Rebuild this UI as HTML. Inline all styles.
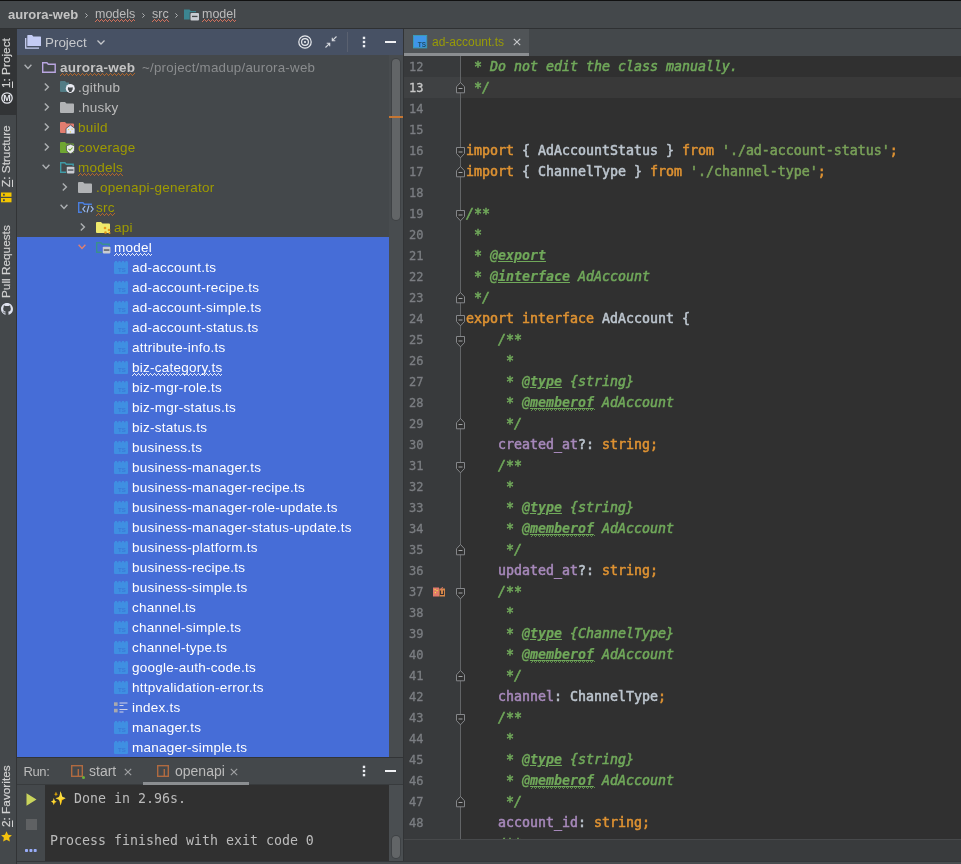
<!DOCTYPE html><html><head><meta charset="utf-8"><title>aurora-web</title><style>
*{box-sizing:border-box}
html,body{margin:0;padding:0}
body{width:961px;height:864px;overflow:hidden;background:#44484b;position:relative;font-family:"Liberation Sans",sans-serif;color:#bbbbbb;font-size:14px}
.abs{position:absolute}
#topline{left:0;top:0;width:961px;height:1px;background:#111}
#crumb{left:0;top:1px;width:961px;height:27px;background:#44484b}
#crumbline{left:0;top:28px;width:961px;height:1px;background:#2f3133}
.bc{position:absolute;top:0;height:27px;line-height:27px;font-size:12.5px;color:#bbbbbb;white-space:pre}
.bc.b{font-weight:bold;font-size:13px;color:#c4c4c4}
.wv{text-decoration:underline wavy #c86a55 1px;text-underline-offset:2px}
.wvo{text-decoration:underline wavy #a9642c 1px;text-underline-offset:2px}
.wvw{text-decoration:underline wavy #e6e9f7 1px;text-underline-offset:2px}
#strip{left:0;top:29px;width:17px;height:835px;background:#44484b;border-right:1px solid #323436}
#stripsel{left:0;top:29px;width:16px;height:86px;background:#323436}
.vt{position:absolute;left:-2px;width:16px;white-space:pre;font-size:11.8px;color:#d2d2d2;-webkit-text-stroke:0.2px;writing-mode:vertical-rl;transform:rotate(180deg);line-height:16px;text-align:left}
.vt u{text-decoration:underline;text-underline-offset:-0.3px}
#phead{left:17px;top:29px;width:386px;height:26px;background:#475164}
#tree{left:17px;top:55px;width:372px;height:702px;background:#44484b;overflow:hidden}
#tsb{left:389px;top:55px;width:14px;height:702px;background:#484c4f}
#tthumb{left:392px;top:59px;width:8px;height:161px;border-radius:4px;background:#626567;box-shadow:0 0 0 1px #3f4245}
#tmark{left:389px;top:116px;width:14px;height:2px;background:#c57633}
#sel{left:0;top:182px;width:372px;height:520px;background:#466dd7}
.row{position:absolute;left:0;height:20px;line-height:20px;width:372px;white-space:pre}
.row .t{position:absolute;top:1px;font-size:13.5px;letter-spacing:0.25px;line-height:20px}
.ol{color:#9f9b00}
.wh{color:#ffffff}
.dim{color:#8a8c8e}
svg{position:absolute;overflow:visible}
#root{position:absolute;left:0;top:0;width:961px;height:864px;will-change:transform}
#vdiv{left:403px;top:29px;width:1px;height:832px;background:#323436}
#tabbar{left:404px;top:29px;width:557px;height:27px;background:#44484b}
#tab{left:404px;top:29px;width:125px;height:27px;background:#505457}
#tabul{left:404px;top:53px;width:125px;height:3px;background:#8b8e91}
#tabt{left:432px;top:30px;height:25px;line-height:25px;font-size:12px;color:#989b08;white-space:pre}
#gutter{left:404px;top:56px;width:56px;height:783px;background:#383a3c}
#gline{left:460px;top:56px;width:1px;height:783px;background:#626466}
#code{left:461px;top:56px;width:500px;height:783px;background:#303030;overflow:hidden}
#cur{left:0;top:21px;width:500px;height:21px;background:#393939}
#gcur{left:404px;top:77px;width:56px;height:21px;background:#3f4143}
.ln{position:absolute;left:409px;-webkit-text-stroke:0.3px;width:40px;height:21px;line-height:21px;font-family:"DejaVu Sans Mono","Liberation Mono",monospace;font-size:12px;color:#7b7e82;white-space:pre}
.ln.c{color:#c8c8c8}
.cl{position:absolute;left:5px;-webkit-text-stroke:0.55px;height:21px;line-height:21px;font-family:"DejaVu Sans Mono","Liberation Mono",monospace;font-size:13.29px;color:#bcc5ce;white-space:pre}
.k{color:#de9232}
.s{color:#78a058}
.p{color:#a688ba}
.d{color:#70a85a;font-style:italic}
.dt{color:#70a85a;font-style:italic;font-weight:bold;text-decoration:underline;-webkit-text-stroke:0.2px}
.dtw{color:#70a85a;font-style:italic;font-weight:bold;text-decoration:underline}
#ebot{left:404px;top:839px;width:557px;height:22px;background:#393b3d;border-top:1px solid #47494b}
#bottom{left:17px;top:861px;width:944px;height:3px;background:#494d50;border-top:1px solid #34373a}
#rdiv{left:17px;top:757px;width:386px;height:1px;background:#323436}
#rhead{left:17px;top:758px;width:386px;height:27px;background:#44484b}
#rul{left:143px;top:782px;width:106px;height:3px;background:#8b8e91}
#rtool{left:17px;top:785px;width:28px;height:76px;background:#44484b}
#cons{left:45px;top:785px;width:344px;height:76px;background:#303030}
#csb{left:389px;top:785px;width:14px;height:76px;background:#4a4e51}
#cthumb{left:392px;top:836px;width:8px;height:22px;border-radius:4px;background:#626567;box-shadow:0 0 0 1px #3f4245}
.co{position:absolute;left:50px;height:21px;line-height:21px;font-family:"DejaVu Sans Mono","Liberation Mono",monospace;font-size:13.29px;color:#bbbbbb;white-space:pre}
.rt{position:absolute;top:758px;height:25px;line-height:26px;font-size:14px;color:#bbbbbb;white-space:pre}
</style></head><body><div id="root">
<svg width="0" height="0" style="left:0;top:0"><defs><pattern id="wv0" width="4" height="3" patternUnits="userSpaceOnUse"><rect x="0" y="2" width="1" height="1" fill="#d1705c"/><rect x="1" y="1" width="1" height="1" fill="#d1705c"/><rect x="2" y="0" width="1" height="1" fill="#d1705c"/><rect x="3" y="1" width="1" height="1" fill="#d1705c"/></pattern><pattern id="wv1" width="4" height="3" patternUnits="userSpaceOnUse"><rect x="0" y="2" width="1" height="1" fill="#b0652b"/><rect x="1" y="1" width="1" height="1" fill="#b0652b"/><rect x="2" y="0" width="1" height="1" fill="#b0652b"/><rect x="3" y="1" width="1" height="1" fill="#b0652b"/></pattern><pattern id="wv2" width="4" height="3" patternUnits="userSpaceOnUse"><rect x="0" y="2" width="1" height="1" fill="#e6e9f7"/><rect x="1" y="1" width="1" height="1" fill="#e6e9f7"/><rect x="2" y="0" width="1" height="1" fill="#e6e9f7"/><rect x="3" y="1" width="1" height="1" fill="#e6e9f7"/></pattern><pattern id="wv3" width="4" height="3" patternUnits="userSpaceOnUse"><rect x="0" y="2" width="1" height="1" fill="#5f8f4c"/><rect x="1" y="1" width="1" height="1" fill="#5f8f4c"/><rect x="2" y="0" width="1" height="1" fill="#5f8f4c"/><rect x="3" y="1" width="1" height="1" fill="#5f8f4c"/></pattern></defs></svg>
<div class="abs" id="crumb">
<span class="bc b" style="left:8px">aurora-web</span>
<svg style="left:84.5px;top:11.500px" width="3" height="5" viewBox="0 0 3 5"><path d="M0.400 0.400L2.500 2.500L0.400 4.600" fill="none" stroke="#b0b2b4" stroke-width="1"/></svg>
<span class="bc" style="left:95px">models</span><svg style="left:95px;top:18px" width="40" height="3" shape-rendering="crispEdges"><rect width="40" height="3" fill="url(#wv0)"/></svg>
<svg style="left:141.5px;top:11.500px" width="3" height="5" viewBox="0 0 3 5"><path d="M0.400 0.400L2.500 2.500L0.400 4.600" fill="none" stroke="#b0b2b4" stroke-width="1"/></svg>
<span class="bc" style="left:152px">src</span><svg style="left:152px;top:18px" width="17" height="3" shape-rendering="crispEdges"><rect width="17" height="3" fill="url(#wv0)"/></svg>
<svg style="left:175.0px;top:11.500px" width="3" height="5" viewBox="0 0 3 5"><path d="M0.400 0.400L2.500 2.500L0.400 4.600" fill="none" stroke="#b0b2b4" stroke-width="1"/></svg>
<svg style="left:184px;top:7px" width="16" height="13" viewBox="0 0 16 13"><path d="M0 1.500h5.500l1.300 1.600H12V11.500H0z" fill="#3b8591"/><rect x="5.700" y="4.200" width="10" height="9" fill="#44484b"/><rect x="6.5" y="5" width="8.5" height="7.5" rx="1" fill="#c9ccd2"/><rect x="8" y="7.8" width="5.5" height="1.3" fill="#44484b"/></svg>
<span class="bc" style="left:202px">model</span><svg style="left:202px;top:18px" width="34" height="3" shape-rendering="crispEdges"><rect width="34" height="3" fill="url(#wv0)"/></svg>
</div>
<div class="abs" id="topline"></div><div class="abs" id="crumbline"></div>
<div class="abs" id="strip"></div><div class="abs" id="stripsel"></div>
<div class="vt" style="top:38px;height:50px"><u>1</u>: Project</div>
<div class="vt" style="top:126px;height:61px"><u>Z</u>: Structure</div>
<div class="vt" style="top:227px;height:71px">Pull Requests</div>
<div class="vt" style="top:766px;height:61px"><u>2</u>: Favorites</div>
<svg style="left:1px;top:92px" width="12" height="12" viewBox="0 0 12 12"><circle cx="6" cy="6" r="5.2" fill="none" stroke="#e2e4ea" stroke-width="1.3"/><text x="6" y="9.200" text-anchor="middle" font-family="Liberation Sans,sans-serif" font-size="9" font-weight="bold" fill="#e2e4ea">M</text></svg>
<svg style="left:1px;top:192px" width="11" height="11" viewBox="0 0 11 11"><rect x="0" y="0.5" width="10.5" height="4.3" fill="#f2c500"/><rect x="0" y="6" width="10.5" height="4.3" fill="#f2c500"/><rect x="2" y="1.8" width="1.8" height="1.8" fill="#44484b"/><rect x="2" y="7.3" width="1.8" height="1.8" fill="#44484b"/></svg>
<svg style="left:1px;top:303px" width="12" height="12" viewBox="0 0 16 16"><path fill="#dfe2ee" d="M8 0C3.58 0 0 3.58 0 8c0 3.54 2.29 6.53 5.47 7.59.4.07.55-.17.55-.38 0-.19-.01-.82-.01-1.49-2.01.37-2.53-.49-2.69-.94-.09-.23-.48-.94-.82-1.13-.28-.15-.68-.52-.01-.53.63-.01 1.08.58 1.23.82.72 1.21 1.87.87 2.33.66.07-.52.28-.87.51-1.07-1.78-.2-3.64-.89-3.64-3.95 0-.87.31-1.59.82-2.15-.08-.2-.36-1.02.08-2.12 0 0 .67-.21 2.2.82.64-.18 1.32-.27 2-.27s1.36.09 2 .27c1.53-1.04 2.2-.82 2.2-.82.44 1.1.16 1.92.08 2.12.51.56.82 1.27.82 2.15 0 3.07-1.87 3.75-3.65 3.95.29.25.54.73.54 1.48 0 1.07-.01 1.93-.01 2.2 0 .21.15.46.55.38A8.01 8.01 0 0 0 16 8c0-4.42-3.58-8-8-8z"/></svg>
<svg style="left:1px;top:831px" width="11" height="11" viewBox="0 0 11 11"><path d="M5.5 0.2L7.1 3.8L10.9 4.2L8.1 6.8L8.9 10.6L5.5 8.7L2.1 10.6L2.9 6.8L0.1 4.2L3.9 3.8Z" fill="#f4c20d"/></svg>
<div class="abs" id="phead">
<svg style="left:8px;top:6px" width="16" height="14" viewBox="0 0 16 14"><path d="M0.700 3v10.100h13.300" fill="none" stroke="#c8cff2" stroke-width="1.300"/><path d="M2.300 0.600a0.600 0.600 0 0 1 0.600-0.600h4.100l1.300 1.500h7.100a0.600 0.600 0 0 1 0.600 0.600V10.400a0.600 0.600 0 0 1-0.600 0.600H2.300z" fill="#c3cbf4"/></svg>
<span class="abs" style="left:28px;top:0;height:26px;line-height:27px;font-size:13.4px;color:#c6c8cc">Project</span>
<svg style="left:80px;top:11px" width="8" height="5" viewBox="0 0 8 5"><path d="M0.5 0.5L4 4L7.5 0.5" fill="none" stroke="#c6c8cc" stroke-width="1.3"/></svg>
<svg style="left:281px;top:6px" width="14" height="14" viewBox="0 0 14 14"><circle cx="7" cy="7" r="6.2" fill="none" stroke="#e8eaee" stroke-width="1.2"/><circle cx="7" cy="7" r="3.4" fill="none" stroke="#e8eaee" stroke-width="1.2"/><circle cx="7" cy="7" r="1.1" fill="#e8eaee"/></svg>
<svg style="left:308px;top:7px" width="12" height="12" viewBox="0 0 12 12"><path d="M11.5 0.5L7.3 4.7M7.3 1.7v3h3M0.5 11.5L4.7 7.3M4.7 10.3v-3h-3" fill="none" stroke="#d5d8dd" stroke-width="1.1"/></svg>
<div class="abs" style="left:330px;top:3px;width:1px;height:20px;background:#5a6170"></div>
<svg style="left:345px;top:7px" width="4" height="12" viewBox="0 0 4 12"><rect x="0.8" y="0.7" width="2.4" height="2.4" fill="#eceef2"/><rect x="0.8" y="4.8" width="2.4" height="2.4" fill="#eceef2"/><rect x="0.8" y="8.9" width="2.4" height="2.4" fill="#eceef2"/></svg>
<div class="abs" style="left:367.5px;top:11.7px;width:11px;height:2.6px;background:#f0f1f4"></div>
</div>
<div class="abs" id="tree"><div class="abs" id="sel"></div>
<div class="row" style="top:2px"><svg style="left:7px;top:7px" width="8" height="6" viewBox="0 0 8 6"><path d="M0.6 0.8L4 4.4L7.4 0.8" fill="none" stroke="#adb0b3" stroke-width="1.4"/></svg><svg style="left:25px;top:5px" width="14" height="11" viewBox="0 0 14 11"><path d="M0.7 0.7h4.2l1.4 1.6h6.9v7.9H0.7z" fill="none" stroke="#b9a6e0" stroke-width="1.4"/></svg><span class="t " style="left:43px"><b style="color:#c4c4c4">aurora-web</b></span><span class="t dim" style="left:125px;font-size:13.3px">~/project/madup/aurora-web</span><svg style="left:43px;top:16px" width="75" height="3" shape-rendering="crispEdges"><rect width="75" height="3" fill="url(#wv1)"/></svg></div>
<div class="row" style="top:22px"><svg style="left:27px;top:6px" width="6" height="8" viewBox="0 0 6 8"><path d="M0.8 0.6L4.4 4L0.8 7.4" fill="none" stroke="#adb0b3" stroke-width="1.4"/></svg><svg style="left:43px;top:4px" width="15" height="12" viewBox="0 0 15 12"><path d="M0 1a1 1 0 0 1 1-1h4l1.5 1.6H9V11H1a1 1 0 0 1-1-1z" fill="#527c85"/><circle cx="10.3" cy="7.4" r="4.5" fill="#e9ebf2"/><path d="M8.6 9.6c-.6-.6-.9-1.4-.7-2.3.1-.5.0-1 .2-1.4l.9.5h2.6l.9-.5c.2.4.1.9.2 1.4.2.9-.1 1.7-.7 2.3-.3.3-.6.9-.6 1.5h-2.200c0-.6-.3-1.200-.6-1.500z" fill="#44484b"/></svg><span class="t " style="left:61px">.github</span></div>
<div class="row" style="top:42px"><svg style="left:27px;top:6px" width="6" height="8" viewBox="0 0 6 8"><path d="M0.8 0.6L4.4 4L0.8 7.4" fill="none" stroke="#adb0b3" stroke-width="1.4"/></svg><svg style="left:43px;top:5px" width="14" height="11" viewBox="0 0 14 11"><path d="M0 1a1 1 0 0 1 1-1h4l1.5 1.6H13a1 1 0 0 1 1 1V10a1 1 0 0 1-1 1H1a1 1 0 0 1-1-1z" fill="#b1b3b5"/></svg><span class="t " style="left:61px">.husky</span></div>
<div class="row" style="top:62px"><svg style="left:27px;top:6px" width="6" height="8" viewBox="0 0 6 8"><path d="M0.8 0.6L4.4 4L0.8 7.4" fill="none" stroke="#adb0b3" stroke-width="1.4"/></svg><svg style="left:43px;top:5px" width="14" height="11" viewBox="0 0 14 11"><path d="M0 1a1 1 0 0 1 1-1h4l1.5 1.6H13a1 1 0 0 1 1 1V10a1 1 0 0 1-1 1H1a1 1 0 0 1-1-1z" fill="#e27d6f"/></svg><svg style="left:49px;top:8px" width="9" height="9" viewBox="0 0 9 9"><path d="M4.500 0L9 3.500V9H0V3.500z" fill="#e0e4f4" stroke="#44484b" stroke-width="0.800"/><rect x="2" y="4" width="1.200" height="1.200" fill="#e8d84a"/><rect x="5.500" y="3.500" width="1.200" height="1.200" fill="#e8d84a"/><rect x="3.800" y="6.300" width="1.200" height="1.200" fill="#e8d84a"/></svg><span class="t ol" style="left:61px">build</span></div>
<div class="row" style="top:82px"><svg style="left:27px;top:6px" width="6" height="8" viewBox="0 0 6 8"><path d="M0.8 0.6L4.4 4L0.8 7.4" fill="none" stroke="#adb0b3" stroke-width="1.4"/></svg><svg style="left:43px;top:5px" width="14" height="11" viewBox="0 0 14 11"><path d="M0 1a1 1 0 0 1 1-1h4l1.5 1.6H13a1 1 0 0 1 1 1V10a1 1 0 0 1-1 1H1a1 1 0 0 1-1-1z" fill="#6fa632"/></svg><svg style="left:49px;top:7px" width="9" height="10" viewBox="0 0 9 10"><path d="M4.500 0.300L8.600 1.800V5c0 2.500-2 4-4.100 4.700C2.400 9 0.400 7.500 0.400 5V1.800z" fill="#e8ebe6" stroke="#44484b" stroke-width="0.800"/><path d="M2.500 4.800l1.500 1.500l2.600-2.800" fill="none" stroke="#6fa632" stroke-width="1.100"/></svg><span class="t ol" style="left:61px">coverage</span></div>
<div class="row" style="top:102px"><svg style="left:25px;top:7px" width="8" height="6" viewBox="0 0 8 6"><path d="M0.6 0.8L4 4.4L7.4 0.8" fill="none" stroke="#adb0b3" stroke-width="1.4"/></svg><svg style="left:43px;top:5px" width="14" height="11" viewBox="0 0 14 11"><path d="M0.7 0.7h4.2l1.4 1.6h6.9v7.9H0.7z" fill="none" stroke="#3f9aa6" stroke-width="1.4"/></svg><svg style="left:49px;top:9px" width="9" height="8" viewBox="0 0 9 8"><rect x="0" y="0" width="9" height="8" rx="1" fill="#44484b"/><rect x="0.8" y="0.8" width="7.6" height="6.6" rx="0.8" fill="#c9ccd2"/><rect x="1.8" y="3.4" width="5.6" height="1.3" fill="#4a4d55"/></svg><span class="t ol" style="left:61px">models</span><svg style="left:61px;top:16px" width="45" height="3" shape-rendering="crispEdges"><rect width="45" height="3" fill="url(#wv1)"/></svg></div>
<div class="row" style="top:122px"><svg style="left:45px;top:6px" width="6" height="8" viewBox="0 0 6 8"><path d="M0.8 0.6L4.4 4L0.8 7.4" fill="none" stroke="#adb0b3" stroke-width="1.4"/></svg><svg style="left:61px;top:5px" width="14" height="11" viewBox="0 0 14 11"><path d="M0 1a1 1 0 0 1 1-1h4l1.5 1.6H13a1 1 0 0 1 1 1V10a1 1 0 0 1-1 1H1a1 1 0 0 1-1-1z" fill="#b1b3b5"/></svg><span class="t ol" style="left:79px">.openapi-generator</span></div>
<div class="row" style="top:142px"><svg style="left:43px;top:7px" width="8" height="6" viewBox="0 0 8 6"><path d="M0.6 0.8L4 4.4L7.4 0.8" fill="none" stroke="#adb0b3" stroke-width="1.4"/></svg><svg style="left:61px;top:5px" width="14" height="11" viewBox="0 0 14 11"><path d="M0.7 0.7h4.2l1.4 1.6h6.9v7.9H0.7z" fill="none" stroke="#4a7fe0" stroke-width="1.4"/></svg><svg style="left:65px;top:8px" width="12" height="8" viewBox="0 0 12 8"><rect x="0" y="0" width="12" height="8" fill="#44484b"/><path d="M3.200 1.200L0.800 4L3.200 6.800M8.800 1.200L11.200 4L8.800 6.800M7 0.500L5 7.500" fill="none" stroke="#9fc0f5" stroke-width="1.100"/></svg><span class="t ol" style="left:79px">src</span><svg style="left:79px;top:16px" width="19" height="3" shape-rendering="crispEdges"><rect width="19" height="3" fill="url(#wv1)"/></svg></div>
<div class="row" style="top:162px"><svg style="left:63px;top:6px" width="6" height="8" viewBox="0 0 6 8"><path d="M0.8 0.6L4.4 4L0.8 7.4" fill="none" stroke="#adb0b3" stroke-width="1.4"/></svg><svg style="left:79px;top:5px" width="14" height="11" viewBox="0 0 14 11"><path d="M0 1a1 1 0 0 1 1-1h4l1.5 1.6H13a1 1 0 0 1 1 1V10a1 1 0 0 1-1 1H1a1 1 0 0 1-1-1z" fill="#efe96c"/></svg><svg style="left:86px;top:9px" width="8" height="8" viewBox="0 0 8 8"><circle cx="2" cy="2" r="1.300" fill="#e89a1c"/><circle cx="6" cy="4" r="1.300" fill="#e89a1c"/><circle cx="2.500" cy="6.500" r="1.300" fill="#e89a1c"/><circle cx="6.500" cy="7" r="1" fill="#e89a1c"/></svg><span class="t ol" style="left:97px">api</span></div>
<div class="row" style="top:182px"><svg style="left:61px;top:7px" width="8" height="6" viewBox="0 0 8 6"><path d="M0.6 0.8L4 4.4L7.4 0.8" fill="none" stroke="#e08070" stroke-width="1.4"/></svg><svg style="left:79px;top:5px" width="14" height="11" viewBox="0 0 14 11"><path d="M0.7 0.7h4.2l1.4 1.6h6.9v7.9H0.7z" fill="none" stroke="#3a8f8f" stroke-width="1.4"/></svg><svg style="left:85px;top:9px" width="9" height="8" viewBox="0 0 9 8"><rect x="0" y="0" width="9" height="8" rx="1" fill="#466dd7"/><rect x="0.8" y="0.8" width="7.6" height="6.6" rx="0.8" fill="#c9ccd2"/><rect x="1.8" y="3.4" width="5.6" height="1.3" fill="#4a4d55"/></svg><span class="t wh" style="left:97px">model</span><svg style="left:97px;top:16px" width="38" height="3" shape-rendering="crispEdges"><rect width="38" height="3" fill="url(#wv2)"/></svg></div>
<div class="row" style="top:202px"><svg style="left:97px;top:4px" width="14" height="13" viewBox="0 0 14 13"><path d="M0 1.200h14V12a1 1 0 0 1-1 1H1a1 1 0 0 1-1-1z" fill="#3f8fe2"/><path d="M1 0h2v2H1zM4.500 0h2v2h-2zM8 0h2v2H8zM11.500 0h2v2h-2z" fill="#3f8fe2"/><text x="4" y="11" font-family="Liberation Sans,sans-serif" font-size="6" font-weight="bold" fill="#3a78d6">TS</text></svg><span class="t wh" style="left:115px">ad-account.ts</span></div>
<div class="row" style="top:222px"><svg style="left:97px;top:4px" width="14" height="13" viewBox="0 0 14 13"><path d="M0 1.200h14V12a1 1 0 0 1-1 1H1a1 1 0 0 1-1-1z" fill="#3f8fe2"/><path d="M1 0h2v2H1zM4.500 0h2v2h-2zM8 0h2v2H8zM11.500 0h2v2h-2z" fill="#3f8fe2"/><text x="4" y="11" font-family="Liberation Sans,sans-serif" font-size="6" font-weight="bold" fill="#3a78d6">TS</text></svg><span class="t wh" style="left:115px">ad-account-recipe.ts</span></div>
<div class="row" style="top:242px"><svg style="left:97px;top:4px" width="14" height="13" viewBox="0 0 14 13"><path d="M0 1.200h14V12a1 1 0 0 1-1 1H1a1 1 0 0 1-1-1z" fill="#3f8fe2"/><path d="M1 0h2v2H1zM4.500 0h2v2h-2zM8 0h2v2H8zM11.500 0h2v2h-2z" fill="#3f8fe2"/><text x="4" y="11" font-family="Liberation Sans,sans-serif" font-size="6" font-weight="bold" fill="#3a78d6">TS</text></svg><span class="t wh" style="left:115px">ad-account-simple.ts</span></div>
<div class="row" style="top:262px"><svg style="left:97px;top:4px" width="14" height="13" viewBox="0 0 14 13"><path d="M0 1.200h14V12a1 1 0 0 1-1 1H1a1 1 0 0 1-1-1z" fill="#3f8fe2"/><path d="M1 0h2v2H1zM4.500 0h2v2h-2zM8 0h2v2H8zM11.500 0h2v2h-2z" fill="#3f8fe2"/><text x="4" y="11" font-family="Liberation Sans,sans-serif" font-size="6" font-weight="bold" fill="#3a78d6">TS</text></svg><span class="t wh" style="left:115px">ad-account-status.ts</span></div>
<div class="row" style="top:282px"><svg style="left:97px;top:4px" width="14" height="13" viewBox="0 0 14 13"><path d="M0 1.200h14V12a1 1 0 0 1-1 1H1a1 1 0 0 1-1-1z" fill="#3f8fe2"/><path d="M1 0h2v2H1zM4.500 0h2v2h-2zM8 0h2v2H8zM11.500 0h2v2h-2z" fill="#3f8fe2"/><text x="4" y="11" font-family="Liberation Sans,sans-serif" font-size="6" font-weight="bold" fill="#3a78d6">TS</text></svg><span class="t wh" style="left:115px">attribute-info.ts</span></div>
<div class="row" style="top:302px"><svg style="left:97px;top:4px" width="14" height="13" viewBox="0 0 14 13"><path d="M0 1.200h14V12a1 1 0 0 1-1 1H1a1 1 0 0 1-1-1z" fill="#3f8fe2"/><path d="M1 0h2v2H1zM4.500 0h2v2h-2zM8 0h2v2H8zM11.500 0h2v2h-2z" fill="#3f8fe2"/><text x="4" y="11" font-family="Liberation Sans,sans-serif" font-size="6" font-weight="bold" fill="#3a78d6">TS</text></svg><span class="t wh" style="left:115px">biz-category.ts</span><svg style="left:115px;top:16px" width="90" height="3" shape-rendering="crispEdges"><rect width="90" height="3" fill="url(#wv2)"/></svg></div>
<div class="row" style="top:322px"><svg style="left:97px;top:4px" width="14" height="13" viewBox="0 0 14 13"><path d="M0 1.200h14V12a1 1 0 0 1-1 1H1a1 1 0 0 1-1-1z" fill="#3f8fe2"/><path d="M1 0h2v2H1zM4.500 0h2v2h-2zM8 0h2v2H8zM11.500 0h2v2h-2z" fill="#3f8fe2"/><text x="4" y="11" font-family="Liberation Sans,sans-serif" font-size="6" font-weight="bold" fill="#3a78d6">TS</text></svg><span class="t wh" style="left:115px">biz-mgr-role.ts</span></div>
<div class="row" style="top:342px"><svg style="left:97px;top:4px" width="14" height="13" viewBox="0 0 14 13"><path d="M0 1.200h14V12a1 1 0 0 1-1 1H1a1 1 0 0 1-1-1z" fill="#3f8fe2"/><path d="M1 0h2v2H1zM4.500 0h2v2h-2zM8 0h2v2H8zM11.500 0h2v2h-2z" fill="#3f8fe2"/><text x="4" y="11" font-family="Liberation Sans,sans-serif" font-size="6" font-weight="bold" fill="#3a78d6">TS</text></svg><span class="t wh" style="left:115px">biz-mgr-status.ts</span></div>
<div class="row" style="top:362px"><svg style="left:97px;top:4px" width="14" height="13" viewBox="0 0 14 13"><path d="M0 1.200h14V12a1 1 0 0 1-1 1H1a1 1 0 0 1-1-1z" fill="#3f8fe2"/><path d="M1 0h2v2H1zM4.500 0h2v2h-2zM8 0h2v2H8zM11.500 0h2v2h-2z" fill="#3f8fe2"/><text x="4" y="11" font-family="Liberation Sans,sans-serif" font-size="6" font-weight="bold" fill="#3a78d6">TS</text></svg><span class="t wh" style="left:115px">biz-status.ts</span></div>
<div class="row" style="top:382px"><svg style="left:97px;top:4px" width="14" height="13" viewBox="0 0 14 13"><path d="M0 1.200h14V12a1 1 0 0 1-1 1H1a1 1 0 0 1-1-1z" fill="#3f8fe2"/><path d="M1 0h2v2H1zM4.500 0h2v2h-2zM8 0h2v2H8zM11.500 0h2v2h-2z" fill="#3f8fe2"/><text x="4" y="11" font-family="Liberation Sans,sans-serif" font-size="6" font-weight="bold" fill="#3a78d6">TS</text></svg><span class="t wh" style="left:115px">business.ts</span></div>
<div class="row" style="top:402px"><svg style="left:97px;top:4px" width="14" height="13" viewBox="0 0 14 13"><path d="M0 1.200h14V12a1 1 0 0 1-1 1H1a1 1 0 0 1-1-1z" fill="#3f8fe2"/><path d="M1 0h2v2H1zM4.500 0h2v2h-2zM8 0h2v2H8zM11.500 0h2v2h-2z" fill="#3f8fe2"/><text x="4" y="11" font-family="Liberation Sans,sans-serif" font-size="6" font-weight="bold" fill="#3a78d6">TS</text></svg><span class="t wh" style="left:115px">business-manager.ts</span></div>
<div class="row" style="top:422px"><svg style="left:97px;top:4px" width="14" height="13" viewBox="0 0 14 13"><path d="M0 1.200h14V12a1 1 0 0 1-1 1H1a1 1 0 0 1-1-1z" fill="#3f8fe2"/><path d="M1 0h2v2H1zM4.500 0h2v2h-2zM8 0h2v2H8zM11.500 0h2v2h-2z" fill="#3f8fe2"/><text x="4" y="11" font-family="Liberation Sans,sans-serif" font-size="6" font-weight="bold" fill="#3a78d6">TS</text></svg><span class="t wh" style="left:115px">business-manager-recipe.ts</span></div>
<div class="row" style="top:442px"><svg style="left:97px;top:4px" width="14" height="13" viewBox="0 0 14 13"><path d="M0 1.200h14V12a1 1 0 0 1-1 1H1a1 1 0 0 1-1-1z" fill="#3f8fe2"/><path d="M1 0h2v2H1zM4.500 0h2v2h-2zM8 0h2v2H8zM11.500 0h2v2h-2z" fill="#3f8fe2"/><text x="4" y="11" font-family="Liberation Sans,sans-serif" font-size="6" font-weight="bold" fill="#3a78d6">TS</text></svg><span class="t wh" style="left:115px">business-manager-role-update.ts</span></div>
<div class="row" style="top:462px"><svg style="left:97px;top:4px" width="14" height="13" viewBox="0 0 14 13"><path d="M0 1.200h14V12a1 1 0 0 1-1 1H1a1 1 0 0 1-1-1z" fill="#3f8fe2"/><path d="M1 0h2v2H1zM4.500 0h2v2h-2zM8 0h2v2H8zM11.500 0h2v2h-2z" fill="#3f8fe2"/><text x="4" y="11" font-family="Liberation Sans,sans-serif" font-size="6" font-weight="bold" fill="#3a78d6">TS</text></svg><span class="t wh" style="left:115px">business-manager-status-update.ts</span></div>
<div class="row" style="top:482px"><svg style="left:97px;top:4px" width="14" height="13" viewBox="0 0 14 13"><path d="M0 1.200h14V12a1 1 0 0 1-1 1H1a1 1 0 0 1-1-1z" fill="#3f8fe2"/><path d="M1 0h2v2H1zM4.500 0h2v2h-2zM8 0h2v2H8zM11.500 0h2v2h-2z" fill="#3f8fe2"/><text x="4" y="11" font-family="Liberation Sans,sans-serif" font-size="6" font-weight="bold" fill="#3a78d6">TS</text></svg><span class="t wh" style="left:115px">business-platform.ts</span></div>
<div class="row" style="top:502px"><svg style="left:97px;top:4px" width="14" height="13" viewBox="0 0 14 13"><path d="M0 1.200h14V12a1 1 0 0 1-1 1H1a1 1 0 0 1-1-1z" fill="#3f8fe2"/><path d="M1 0h2v2H1zM4.500 0h2v2h-2zM8 0h2v2H8zM11.500 0h2v2h-2z" fill="#3f8fe2"/><text x="4" y="11" font-family="Liberation Sans,sans-serif" font-size="6" font-weight="bold" fill="#3a78d6">TS</text></svg><span class="t wh" style="left:115px">business-recipe.ts</span></div>
<div class="row" style="top:522px"><svg style="left:97px;top:4px" width="14" height="13" viewBox="0 0 14 13"><path d="M0 1.200h14V12a1 1 0 0 1-1 1H1a1 1 0 0 1-1-1z" fill="#3f8fe2"/><path d="M1 0h2v2H1zM4.500 0h2v2h-2zM8 0h2v2H8zM11.500 0h2v2h-2z" fill="#3f8fe2"/><text x="4" y="11" font-family="Liberation Sans,sans-serif" font-size="6" font-weight="bold" fill="#3a78d6">TS</text></svg><span class="t wh" style="left:115px">business-simple.ts</span></div>
<div class="row" style="top:542px"><svg style="left:97px;top:4px" width="14" height="13" viewBox="0 0 14 13"><path d="M0 1.200h14V12a1 1 0 0 1-1 1H1a1 1 0 0 1-1-1z" fill="#3f8fe2"/><path d="M1 0h2v2H1zM4.500 0h2v2h-2zM8 0h2v2H8zM11.500 0h2v2h-2z" fill="#3f8fe2"/><text x="4" y="11" font-family="Liberation Sans,sans-serif" font-size="6" font-weight="bold" fill="#3a78d6">TS</text></svg><span class="t wh" style="left:115px">channel.ts</span></div>
<div class="row" style="top:562px"><svg style="left:97px;top:4px" width="14" height="13" viewBox="0 0 14 13"><path d="M0 1.200h14V12a1 1 0 0 1-1 1H1a1 1 0 0 1-1-1z" fill="#3f8fe2"/><path d="M1 0h2v2H1zM4.500 0h2v2h-2zM8 0h2v2H8zM11.500 0h2v2h-2z" fill="#3f8fe2"/><text x="4" y="11" font-family="Liberation Sans,sans-serif" font-size="6" font-weight="bold" fill="#3a78d6">TS</text></svg><span class="t wh" style="left:115px">channel-simple.ts</span></div>
<div class="row" style="top:582px"><svg style="left:97px;top:4px" width="14" height="13" viewBox="0 0 14 13"><path d="M0 1.200h14V12a1 1 0 0 1-1 1H1a1 1 0 0 1-1-1z" fill="#3f8fe2"/><path d="M1 0h2v2H1zM4.500 0h2v2h-2zM8 0h2v2H8zM11.500 0h2v2h-2z" fill="#3f8fe2"/><text x="4" y="11" font-family="Liberation Sans,sans-serif" font-size="6" font-weight="bold" fill="#3a78d6">TS</text></svg><span class="t wh" style="left:115px">channel-type.ts</span></div>
<div class="row" style="top:602px"><svg style="left:97px;top:4px" width="14" height="13" viewBox="0 0 14 13"><path d="M0 1.200h14V12a1 1 0 0 1-1 1H1a1 1 0 0 1-1-1z" fill="#3f8fe2"/><path d="M1 0h2v2H1zM4.500 0h2v2h-2zM8 0h2v2H8zM11.500 0h2v2h-2z" fill="#3f8fe2"/><text x="4" y="11" font-family="Liberation Sans,sans-serif" font-size="6" font-weight="bold" fill="#3a78d6">TS</text></svg><span class="t wh" style="left:115px">google-auth-code.ts</span></div>
<div class="row" style="top:622px"><svg style="left:97px;top:4px" width="14" height="13" viewBox="0 0 14 13"><path d="M0 1.200h14V12a1 1 0 0 1-1 1H1a1 1 0 0 1-1-1z" fill="#3f8fe2"/><path d="M1 0h2v2H1zM4.500 0h2v2h-2zM8 0h2v2H8zM11.500 0h2v2h-2z" fill="#3f8fe2"/><text x="4" y="11" font-family="Liberation Sans,sans-serif" font-size="6" font-weight="bold" fill="#3a78d6">TS</text></svg><span class="t wh" style="left:115px">httpvalidation-error.ts</span></div>
<div class="row" style="top:642px"><svg style="left:97px;top:4.5px" width="14" height="12" viewBox="0 0 14 12"><rect x="0" y="0.300" width="3.600" height="3.600" fill="#a9a9ae"/><rect x="0" y="6.800" width="3.600" height="3.600" fill="#a9a9ae"/><rect x="5.500" y="0.500" width="8" height="1" fill="#cfd3e6"/><rect x="5.500" y="3" width="4" height="1" fill="#cfd3e6"/><rect x="5.500" y="7" width="8" height="1" fill="#cfd3e6"/><rect x="5.500" y="9.500" width="4" height="1" fill="#cfd3e6"/></svg><span class="t wh" style="left:115px">index.ts</span></div>
<div class="row" style="top:662px"><svg style="left:97px;top:4px" width="14" height="13" viewBox="0 0 14 13"><path d="M0 1.200h14V12a1 1 0 0 1-1 1H1a1 1 0 0 1-1-1z" fill="#3f8fe2"/><path d="M1 0h2v2H1zM4.500 0h2v2h-2zM8 0h2v2H8zM11.500 0h2v2h-2z" fill="#3f8fe2"/><text x="4" y="11" font-family="Liberation Sans,sans-serif" font-size="6" font-weight="bold" fill="#3a78d6">TS</text></svg><span class="t wh" style="left:115px">manager.ts</span></div>
<div class="row" style="top:682px"><svg style="left:97px;top:4px" width="14" height="13" viewBox="0 0 14 13"><path d="M0 1.200h14V12a1 1 0 0 1-1 1H1a1 1 0 0 1-1-1z" fill="#3f8fe2"/><path d="M1 0h2v2H1zM4.500 0h2v2h-2zM8 0h2v2H8zM11.500 0h2v2h-2z" fill="#3f8fe2"/><text x="4" y="11" font-family="Liberation Sans,sans-serif" font-size="6" font-weight="bold" fill="#3a78d6">TS</text></svg><span class="t wh" style="left:115px">manager-simple.ts</span></div>
</div>
<div class="abs" id="tsb"></div><div class="abs" id="tthumb"></div><div class="abs" id="tmark"></div>
<div class="abs" id="vdiv"></div>
<div class="abs" id="tabbar"></div><div class="abs" id="tab"></div><div class="abs" id="tabul"></div>
<svg style="left:412.800px;top:35.200px" width="14.200" height="13.400" viewBox="0 0 14.200 13.400"><rect x="0.500" y="0.500" width="13.200" height="12.400" fill="#3f96e8" stroke="#3a9ab5" stroke-width="1"/><text x="4.800" y="11.600" font-family="Liberation Sans,sans-serif" font-size="6.500" font-weight="bold" fill="#1f4f66">TS</text></svg>
<span class="abs" id="tabt">ad-account.ts</span>
<svg style="left:513px;top:38px" width="8" height="8" viewBox="0 0 8 8"><path d="M0.800 0.800L7.200 7.200M7.200 0.800L0.800 7.200" stroke="#c8cacc" stroke-width="1.100" fill="none"/></svg>
<div class="abs" id="gutter"></div><div class="abs" id="gcur"></div><div class="abs" id="gline"></div>
<div class="abs" id="code"><div class="abs" id="cur"></div>
<div class="cl" style="top:0px"><span class="d"> * Do not edit the class manually.</span></div>
<div class="cl" style="top:21px"><span class="d"> */</span></div>
<div class="cl" style="top:42px"></div>
<div class="cl" style="top:63px"></div>
<div class="cl" style="top:84px"><span class="k">import</span> { AdAccountStatus } <span class="k">from</span> <span class="s">'./ad-account-status'</span><span class="k">;</span></div>
<div class="cl" style="top:105px"><span class="k">import</span> { ChannelType } <span class="k">from</span> <span class="s">'./channel-type'</span><span class="k">;</span></div>
<div class="cl" style="top:126px"></div>
<div class="cl" style="top:147px"><span class="d">/**</span></div>
<div class="cl" style="top:168px"><span class="d"> *</span></div>
<div class="cl" style="top:189px"><span class="d"> * </span><span class="dt">@export</span></div>
<div class="cl" style="top:210px"><span class="d"> * </span><span class="dt">@interface</span><span class="d"> AdAccount</span></div>
<div class="cl" style="top:231px"><span class="d"> */</span></div>
<div class="cl" style="top:252px"><span class="k">export interface</span> AdAccount {</div>
<div class="cl" style="top:273px">    <span class="d">/**</span></div>
<div class="cl" style="top:294px">    <span class="d"> *</span></div>
<div class="cl" style="top:315px">    <span class="d"> * </span><span class="dt">@type</span><span class="d"> {string}</span></div>
<div class="cl" style="top:336px">    <span class="d"> * </span><span class="dt">@memberof</span><span class="d"> AdAccount</span></div>
<svg style="left:70px;top:352px" width="64" height="3" shape-rendering="crispEdges"><rect width="64" height="3" fill="url(#wv3)"/></svg>
<div class="cl" style="top:357px">    <span class="d"> */</span></div>
<div class="cl" style="top:378px">    <span class="p">created_at</span>?: <span class="k">string;</span></div>
<div class="cl" style="top:399px">    <span class="d">/**</span></div>
<div class="cl" style="top:420px">    <span class="d"> *</span></div>
<div class="cl" style="top:441px">    <span class="d"> * </span><span class="dt">@type</span><span class="d"> {string}</span></div>
<div class="cl" style="top:462px">    <span class="d"> * </span><span class="dt">@memberof</span><span class="d"> AdAccount</span></div>
<svg style="left:70px;top:478px" width="64" height="3" shape-rendering="crispEdges"><rect width="64" height="3" fill="url(#wv3)"/></svg>
<div class="cl" style="top:483px">    <span class="d"> */</span></div>
<div class="cl" style="top:504px">    <span class="p">updated_at</span>?: <span class="k">string;</span></div>
<div class="cl" style="top:525px">    <span class="d">/**</span></div>
<div class="cl" style="top:546px">    <span class="d"> *</span></div>
<div class="cl" style="top:567px">    <span class="d"> * </span><span class="dt">@type</span><span class="d"> {ChannelType}</span></div>
<div class="cl" style="top:588px">    <span class="d"> * </span><span class="dt">@memberof</span><span class="d"> AdAccount</span></div>
<svg style="left:70px;top:604px" width="64" height="3" shape-rendering="crispEdges"><rect width="64" height="3" fill="url(#wv3)"/></svg>
<div class="cl" style="top:609px">    <span class="d"> */</span></div>
<div class="cl" style="top:630px">    <span class="p">channel</span>: ChannelType<span class="k">;</span></div>
<div class="cl" style="top:651px">    <span class="d">/**</span></div>
<div class="cl" style="top:672px">    <span class="d"> *</span></div>
<div class="cl" style="top:693px">    <span class="d"> * </span><span class="dt">@type</span><span class="d"> {string}</span></div>
<div class="cl" style="top:714px">    <span class="d"> * </span><span class="dt">@memberof</span><span class="d"> AdAccount</span></div>
<svg style="left:70px;top:730px" width="64" height="3" shape-rendering="crispEdges"><rect width="64" height="3" fill="url(#wv3)"/></svg>
<div class="cl" style="top:735px">    <span class="d"> */</span></div>
<div class="cl" style="top:756px">    <span class="p">account_id</span>: <span class="k">string;</span></div>
<div class="cl" style="top:777px">    <span class="d">/**</span></div>
</div>
<div class="ln" style="top:57px">12</div>
<div class="ln c" style="top:78px">13</div>
<div class="ln" style="top:99px">14</div>
<div class="ln" style="top:120px">15</div>
<div class="ln" style="top:141px">16</div>
<div class="ln" style="top:162px">17</div>
<div class="ln" style="top:183px">18</div>
<div class="ln" style="top:204px">19</div>
<div class="ln" style="top:225px">20</div>
<div class="ln" style="top:246px">21</div>
<div class="ln" style="top:267px">22</div>
<div class="ln" style="top:288px">23</div>
<div class="ln" style="top:309px">24</div>
<div class="ln" style="top:330px">25</div>
<div class="ln" style="top:351px">26</div>
<div class="ln" style="top:372px">27</div>
<div class="ln" style="top:393px">28</div>
<div class="ln" style="top:414px">29</div>
<div class="ln" style="top:435px">30</div>
<div class="ln" style="top:456px">31</div>
<div class="ln" style="top:477px">32</div>
<div class="ln" style="top:498px">33</div>
<div class="ln" style="top:519px">34</div>
<div class="ln" style="top:540px">35</div>
<div class="ln" style="top:561px">36</div>
<div class="ln" style="top:582px">37</div>
<div class="ln" style="top:603px">38</div>
<div class="ln" style="top:624px">39</div>
<div class="ln" style="top:645px">40</div>
<div class="ln" style="top:666px">41</div>
<div class="ln" style="top:687px">42</div>
<div class="ln" style="top:708px">43</div>
<div class="ln" style="top:729px">44</div>
<div class="ln" style="top:750px">45</div>
<div class="ln" style="top:771px">46</div>
<div class="ln" style="top:792px">47</div>
<div class="ln" style="top:813px">48</div>
<svg style="left:456px;top:82px" width="9" height="12" viewBox="0 0 9 12"><path d="M0.500 10.800h8V4.800l-4-4.300l-4 4.300z" fill="#303030" stroke="#85878a" stroke-width="1"/><path d="M2.500 6.500h4" stroke="#a0a2a4" stroke-width="1"/></svg>
<svg style="left:456px;top:146.5px" width="9" height="12" viewBox="0 0 9 12"><path d="M0.500 0.500h8v6l-4 4.300l-4-4.300z" fill="#303030" stroke="#85878a" stroke-width="1"/><path d="M2.500 5h4" stroke="#a0a2a4" stroke-width="1"/></svg>
<svg style="left:456px;top:166px" width="9" height="12" viewBox="0 0 9 12"><path d="M0.500 10.800h8V4.800l-4-4.300l-4 4.300z" fill="#303030" stroke="#85878a" stroke-width="1"/><path d="M2.500 6.500h4" stroke="#a0a2a4" stroke-width="1"/></svg>
<svg style="left:456px;top:209.5px" width="9" height="12" viewBox="0 0 9 12"><path d="M0.500 0.500h8v6l-4 4.300l-4-4.300z" fill="#303030" stroke="#85878a" stroke-width="1"/><path d="M2.500 5h4" stroke="#a0a2a4" stroke-width="1"/></svg>
<svg style="left:456px;top:292px" width="9" height="12" viewBox="0 0 9 12"><path d="M0.500 10.800h8V4.800l-4-4.300l-4 4.300z" fill="#303030" stroke="#85878a" stroke-width="1"/><path d="M2.500 6.500h4" stroke="#a0a2a4" stroke-width="1"/></svg>
<svg style="left:456px;top:314.5px" width="9" height="12" viewBox="0 0 9 12"><path d="M0.500 0.500h8v6l-4 4.300l-4-4.300z" fill="#303030" stroke="#85878a" stroke-width="1"/><path d="M2.500 5h4" stroke="#a0a2a4" stroke-width="1"/></svg>
<svg style="left:456px;top:335.5px" width="9" height="12" viewBox="0 0 9 12"><path d="M0.500 0.500h8v6l-4 4.300l-4-4.300z" fill="#303030" stroke="#85878a" stroke-width="1"/><path d="M2.500 5h4" stroke="#a0a2a4" stroke-width="1"/></svg>
<svg style="left:456px;top:418px" width="9" height="12" viewBox="0 0 9 12"><path d="M0.500 10.800h8V4.800l-4-4.300l-4 4.300z" fill="#303030" stroke="#85878a" stroke-width="1"/><path d="M2.500 6.500h4" stroke="#a0a2a4" stroke-width="1"/></svg>
<svg style="left:456px;top:461.5px" width="9" height="12" viewBox="0 0 9 12"><path d="M0.500 0.500h8v6l-4 4.300l-4-4.300z" fill="#303030" stroke="#85878a" stroke-width="1"/><path d="M2.500 5h4" stroke="#a0a2a4" stroke-width="1"/></svg>
<svg style="left:456px;top:544px" width="9" height="12" viewBox="0 0 9 12"><path d="M0.500 10.800h8V4.800l-4-4.300l-4 4.300z" fill="#303030" stroke="#85878a" stroke-width="1"/><path d="M2.500 6.500h4" stroke="#a0a2a4" stroke-width="1"/></svg>
<svg style="left:456px;top:587.5px" width="9" height="12" viewBox="0 0 9 12"><path d="M0.500 0.500h8v6l-4 4.300l-4-4.300z" fill="#303030" stroke="#85878a" stroke-width="1"/><path d="M2.500 5h4" stroke="#a0a2a4" stroke-width="1"/></svg>
<svg style="left:456px;top:670px" width="9" height="12" viewBox="0 0 9 12"><path d="M0.500 10.800h8V4.800l-4-4.300l-4 4.300z" fill="#303030" stroke="#85878a" stroke-width="1"/><path d="M2.500 6.500h4" stroke="#a0a2a4" stroke-width="1"/></svg>
<svg style="left:456px;top:713.5px" width="9" height="12" viewBox="0 0 9 12"><path d="M0.500 0.500h8v6l-4 4.300l-4-4.300z" fill="#303030" stroke="#85878a" stroke-width="1"/><path d="M2.500 5h4" stroke="#a0a2a4" stroke-width="1"/></svg>
<svg style="left:456px;top:796px" width="9" height="12" viewBox="0 0 9 12"><path d="M0.500 10.800h8V4.800l-4-4.300l-4 4.300z" fill="#303030" stroke="#85878a" stroke-width="1"/><path d="M2.500 6.500h4" stroke="#a0a2a4" stroke-width="1"/></svg>
<svg style="left:433px;top:586.500px" width="12" height="10" viewBox="0 0 12 10"><rect x="0" y="0.500" width="6" height="9" fill="#e27a6a"/><rect x="6.300" y="1.500" width="5.700" height="8" fill="#d98a4a"/><path d="M7.500 3.500v4h3v-4" fill="none" stroke="#3a3032" stroke-width="1.100"/><path d="M8 3L9.500 0" stroke="#e27a6a" stroke-width="1"/><rect x="1.500" y="2" width="1.200" height="1.200" fill="#f0e040"/><rect x="3.500" y="3" width="1.200" height="1.200" fill="#f0e040"/><rect x="1.800" y="5" width="1.200" height="1.200" fill="#f0e040"/></svg>
<div class="abs" id="ebot"></div>
<div class="abs" id="rdiv"></div><div class="abs" id="rhead"></div>
<span class="rt" style="left:23.5px;top:759px;font-size:13px;letter-spacing:-0.4px">Run:</span>
<svg style="left:71px;top:765px" width="12" height="12" viewBox="0 0 12 12"><rect x="0.700" y="0.700" width="10.600" height="10.600" fill="none" stroke="#b06a40" stroke-width="1.400"/><path d="M7.300 4v7" stroke="#b06a40" stroke-width="1.400"/></svg>
<div class="abs" style="left:81.800px;top:776px;width:3px;height:3px;border-radius:1.500px;background:#6cb23a"></div>
<span class="rt" style="left:89px">start</span>
<svg style="left:124px;top:768px" width="8" height="8" viewBox="0 0 8 8"><path d="M0.800 0.800L7.200 7.200M7.200 0.800L0.800 7.200" stroke="#a0a2a4" stroke-width="1.100" fill="none"/></svg>
<svg style="left:157px;top:765px" width="12" height="12" viewBox="0 0 12 12"><rect x="0.700" y="0.700" width="10.600" height="10.600" fill="none" stroke="#b06a40" stroke-width="1.400"/><path d="M7.300 4v7" stroke="#b06a40" stroke-width="1.400"/></svg>
<span class="rt" style="left:175px">openapi</span>
<svg style="left:230px;top:768px" width="8" height="8" viewBox="0 0 8 8"><path d="M0.800 0.800L7.200 7.200M7.200 0.800L0.800 7.200" stroke="#a0a2a4" stroke-width="1.100" fill="none"/></svg>
<div class="abs" style="left:17px;top:784px;width:386px;height:1px;background:#383b3d"></div><div class="abs" id="rul"></div>
<svg style="left:362px;top:765px" width="4" height="12" viewBox="0 0 4 12"><rect x="0.8" y="0.7" width="2.4" height="2.4" fill="#eceef2"/><rect x="0.8" y="4.8" width="2.4" height="2.4" fill="#eceef2"/><rect x="0.8" y="8.9" width="2.4" height="2.4" fill="#eceef2"/></svg>
<div class="abs" style="left:384.5px;top:769.7px;width:11px;height:2.6px;background:#f0f1f4"></div>
<div class="abs" id="rtool"></div><div class="abs" id="cons"></div><div class="abs" id="csb"></div><div class="abs" id="cthumb"></div>
<svg style="left:26px;top:792.500px" width="11" height="13" viewBox="0 0 11 13"><path d="M0.500 0.300L10.500 6.500L0.500 12.700z" fill="#c9d45c"/></svg>
<div class="abs" style="left:26px;top:819px;width:11px;height:11px;background:#5f6163"></div>
<div class="abs" style="left:25px;top:848.500px;width:3px;height:3px;border-radius:0.800px;background:#98acf8;box-shadow:4.400px 0 0 #98acf8,8.700px 0 0 #98acf8"></div>
<div class="co" style="top:788px"><span style="color:#f5c518;display:inline-block;width:16px">✨</span> Done in 2.96s.</div>
<div class="co" style="top:830px">Process finished with exit code 0</div>
<div class="abs" id="bottom"></div>
</div></body></html>
